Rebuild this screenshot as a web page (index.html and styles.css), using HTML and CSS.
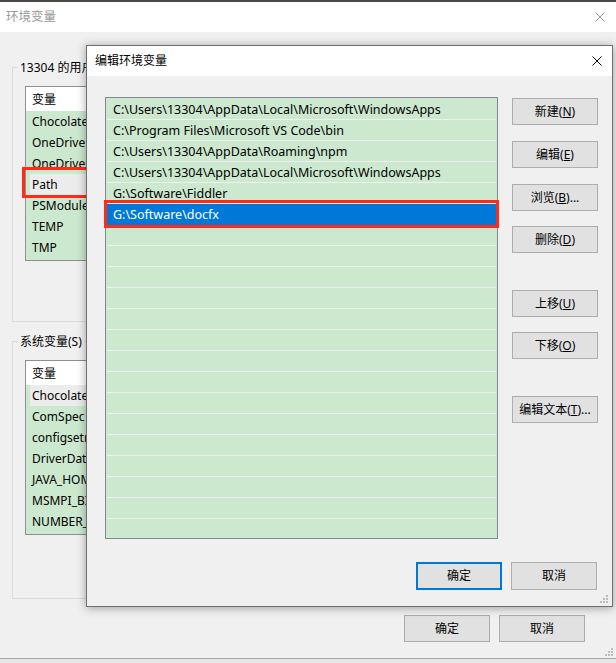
FILE: index.html
```html
<!DOCTYPE html>
<html lang="zh-CN">
<head>
<meta charset="utf-8">
<title>编辑环境变量</title>
<link rel="stylesheet" href="styles.css">
</head>
<body>
<div class="desk"></div>
<div class="win">
  <div class="titlebar">
    <span class="title">环境变量</span>
    <svg class="close close-dim" width="10" height="10" viewBox="0 0 10 10"><path d="M0.5 0.5L9.5 9.5M9.5 0.5L0.5 9.5"/></svg>
  </div>
  <div class="win-body">
    <div class="group g-user">
      <div class="group-label">13304 的用户变量(U)</div>
      <div class="vlist">
        <div class="vhead"><span class="cell">变量</span></div>
        <div class="vrow"><span class="cell">ChocolateyLastPathUpdate</span></div>
        <div class="vrow"><span class="cell">OneDrive</span></div>
        <div class="vrow"><span class="cell">OneDriveConsumer</span></div>
        <div class="vrow"><span class="cell hl">Path</span></div>
        <div class="vrow"><span class="cell">PSModulePath</span></div>
        <div class="vrow"><span class="cell">TEMP</span></div>
        <div class="vrow"><span class="cell">TMP</span></div>
      </div>
    </div>
    <div class="group g-sys">
      <div class="group-label">系统变量(S)</div>
      <div class="vlist">
        <div class="vhead"><span class="cell">变量</span></div>
        <div class="vrow"><span class="cell hl">ChocolateyInstall</span></div>
        <div class="vrow"><span class="cell">ComSpec</span></div>
        <div class="vrow"><span class="cell">configsetroot</span></div>
        <div class="vrow"><span class="cell">DriverData</span></div>
        <div class="vrow"><span class="cell">JAVA_HOME</span></div>
        <div class="vrow"><span class="cell">MSMPI_BIN</span></div>
        <div class="vrow"><span class="cell">NUMBER_OF_PROCESSORS</span></div>
      </div>
    </div>
    <div class="win-foot">
      <div class="btn">确定</div>
      <div class="btn">取消</div>
    </div>
  </div>
  <svg class="grip grip-win" width="8" height="8" viewBox="0 0 8 8"><rect x="6" y="0" width="2" height="2"/><rect x="3" y="3" width="2" height="2"/><rect x="6" y="3" width="2" height="2"/><rect x="0" y="6" width="2" height="2"/><rect x="3" y="6" width="2" height="2"/><rect x="6" y="6" width="2" height="2"/></svg>
  <div class="mark mark-path"></div>

  <div class="dialog">
    <div class="dlg-title">
      <span class="dlg-name">编辑环境变量</span>
      <svg class="close" width="10" height="10" viewBox="0 0 10 10"><path d="M0.5 0.5L9.5 9.5M9.5 0.5L0.5 9.5"/></svg>
    </div>
    <div class="dlg-body">
      <div class="dlg-main">
        <div class="plist-wrap">
          <div class="plist">
            <div class="prow">C:\Users\13304\AppData\Local\Microsoft\WindowsApps</div>
            <div class="prow">C:\Program Files\Microsoft VS Code\bin</div>
            <div class="prow">C:\Users\13304\AppData\Roaming\npm</div>
            <div class="prow">C:\Users\13304\AppData\Local\Microsoft\WindowsApps</div>
            <div class="prow">G:\Software\Fiddler</div>
            <div class="prow sel">G:\Software\docfx</div>
            <div class="prow"></div>
            <div class="prow"></div>
            <div class="prow"></div>
            <div class="prow"></div>
            <div class="prow"></div>
            <div class="prow"></div>
            <div class="prow"></div>
            <div class="prow"></div>
            <div class="prow"></div>
            <div class="prow"></div>
            <div class="prow"></div>
            <div class="prow"></div>
            <div class="prow"></div>
            <div class="prow"></div>
            <div class="prow"></div>
          </div>
          <div class="mark mark-row"></div>
        </div>
        <div class="side">
          <div class="btn s-first">新建(<u>N</u>)</div>
          <div class="btn s-16">编辑(<u>E</u>)</div>
          <div class="btn s-16">浏览(<u>B</u>)...</div>
          <div class="btn s-15">删除(<u>D</u>)</div>
          <div class="btn s-37">上移(<u>U</u>)</div>
          <div class="btn s-15">下移(<u>O</u>)</div>
          <div class="btn s-37">编辑文本(<u>T</u>)...</div>
        </div>
      </div>
      <div class="dlg-foot">
        <div class="btn btn-tall btn-default">确定</div>
        <div class="btn btn-tall">取消</div>
      </div>
    </div>
    <svg class="grip grip-dlg" width="8" height="8" viewBox="0 0 8 8"><rect x="6" y="0" width="2" height="2"/><rect x="3" y="3" width="2" height="2"/><rect x="6" y="3" width="2" height="2"/><rect x="0" y="6" width="2" height="2"/><rect x="3" y="6" width="2" height="2"/><rect x="6" y="6" width="2" height="2"/></svg>
  </div>
</div>
</body>
</html>
```

FILE: styles.css
```css
* { box-sizing: border-box; }
html, body { margin: 0; padding: 0; }
body {
  width: 616px;
  height: 663px;
  overflow: hidden;
  background: #e6e6e6;
  font-family: "Noto Sans", "Noto Sans CJK SC", sans-serif;
  font-size: 12px;
  color: #000;
}
u { text-decoration: underline; text-underline-offset: 1px; }

.desk { height: 2px; background: #4a4744; }

.win {
  position: relative;
  height: 657px;
  background: #f0f0f0;
  border-bottom: 1px solid #a9a9a9;
}

.titlebar {
  height: 30px;
  background: #fff;
  display: flex;
  align-items: center;
  justify-content: space-between;
  padding: 0 11px 0 6px;
}
.title { color: #999; line-height: 16px; font-size: 12.5px; }
.close path { stroke: #000; stroke-width: 1; fill: none; }
.close-dim path { stroke: #9a9a9a; }

.win-body { padding: 35px 0 0 12px; }

.group { width: 591px; border: 1px solid #dcdcdc; }
.g-user { padding-bottom: 60px; }
.g-sys { margin-top: 19px; padding-bottom: 63px; }
.group-label {
  width: fit-content;
  max-width: 74px;
  overflow: hidden;
  white-space: nowrap;
  margin: -9px 0 0 5px;
  padding: 0 2px;
  line-height: 17px;
  background: #f0f0f0;
}

.vlist {
  margin: 10px 0 0 12px;
  width: 565px;
  height: 175px;
  border: 1px solid #8f8f8f;
  background: #cce8cf;
  overflow: hidden;
}
.vhead {
  height: 24px;
  background: #fff;
  display: flex;
  align-items: center;
  padding-left: 6px;
}
.vrow {
  height: 21px;
  display: flex;
  align-items: center;
  padding-left: 4px;
}
.vrow .cell {
  width: 56px;
  height: 21px;
  line-height: 21px;
  padding-left: 2px;
  white-space: nowrap;
  overflow: hidden;
}
.vrow .cell.hl { background: #ececec; }

.win-foot {
  display: flex;
  justify-content: flex-end;
  gap: 9px;
  margin-top: 16px;
  padding-right: 31px;
}

.btn {
  width: 86px;
  height: 27px;
  border: 1px solid #adadad;
  background: #e1e1e1;
  display: flex;
  align-items: center;
  justify-content: center;
  line-height: 16px;
  white-space: nowrap;
}
.btn-tall { height: 28px; }
.btn-default { border: 2px solid #0078d7; }

.grip { position: absolute; }
.grip rect { fill: #bdbdbd; }
.grip-win { right: 3px; bottom: 2px; }
.grip-dlg { right: 4px; bottom: 3px; }

.mark { position: absolute; border: 3px solid #ff2a1a; }
.mark-path { left: 22px; top: 165px; width: 80px; height: 31px; }

.dialog {
  position: absolute;
  left: 86px;
  top: 43px;
  width: 527px;
  height: 562px;
  border: 1px solid #6f6f6f;
  background: #f0f0f0;
  box-shadow: 0 1px 9px rgba(0, 0, 0, 0.35);
  display: flex;
  flex-direction: column;
}
.dlg-title {
  height: 30px;
  flex: none;
  background: #fff;
  display: flex;
  align-items: center;
  justify-content: space-between;
  padding: 0 10px 0 8px;
}
.dlg-name { line-height: 16px; }
.dlg-body {
  flex: 1;
  display: flex;
  flex-direction: column;
  padding: 21px 15px 16px 18px;
}
.dlg-main { display: flex; }
.plist-wrap { position: relative; width: 393px; height: 442px; flex: none; }
.plist {
  height: 442px;
  border: 1px solid #828790;
  background: #cce8cf;
  padding: 1px 1px 0;
  overflow: hidden;
}
.prow {
  height: 21px;
  border-bottom: 1px solid #eef2ee;
  padding: 1px 0 0 6px;
  font-size: 12.5px;
  line-height: 20px;
  white-space: nowrap;
  overflow: hidden;
}
.prow.sel { background: #0078d7; color: #fff; border-bottom-color: #0078d7; }
.mark-row { left: -1px; top: 103px; width: 395px; height: 28px; }

.side { margin-left: 14px; display: flex; flex-direction: column; }
.s-first { margin-top: 1px; }
.s-15 { margin-top: 15px; }
.s-16 { margin-top: 16px; }
.s-37 { margin-top: 37px; }

.dlg-foot {
  margin-top: auto;
  display: flex;
  justify-content: flex-end;
  gap: 9px;
}
```
